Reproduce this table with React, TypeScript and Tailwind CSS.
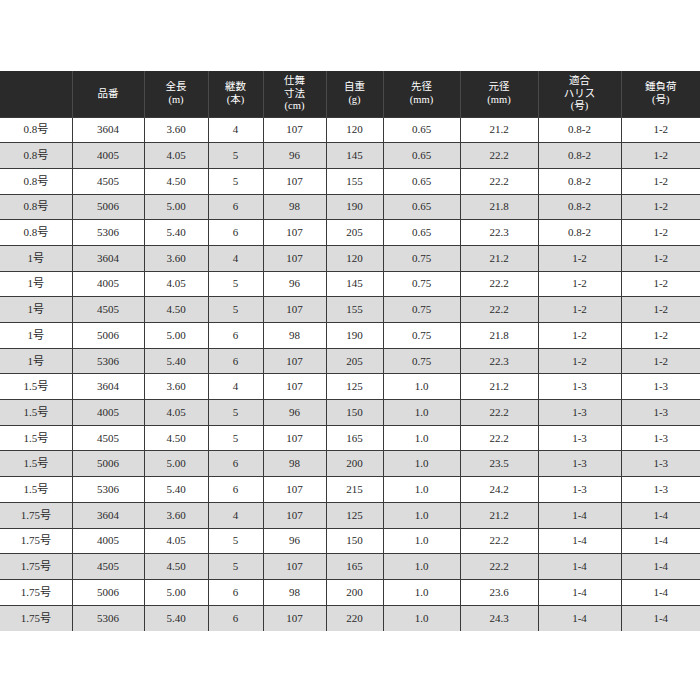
import React from "react";

type Row = string[];

const cols = [
  "w-[72px]",
  "w-[72px]",
  "w-[64px]",
  "w-[55px]",
  "w-[63px]",
  "w-[57px]",
  "w-[77px]",
  "w-[78px]",
  "w-[83px]",
  "w-[79px]",
];

const headers: string[][] = [
  [],
  ["品番"],
  ["全長", "(m)"],
  ["継数", "(本)"],
  ["仕舞", "寸法", "(cm)"],
  ["自重", "(g)"],
  ["先径", "(mm)"],
  ["元径", "(mm)"],
  ["適合", "ハリス", "(号)"],
  ["錘負荷", "(号)"],
];

const models = [
  ["3604", "3.60", "4", "107"],
  ["4005", "4.05", "5", "96"],
  ["4505", "4.50", "5", "107"],
  ["5006", "5.00", "6", "98"],
  ["5306", "5.40", "6", "107"],
];

const groups: { size: string; weights: string[]; tip: string; butts: string[]; harisu: string; load: string }[] = [
  { size: "0.8号", weights: ["120", "145", "155", "190", "205"], tip: "0.65", butts: ["21.2", "22.2", "22.2", "21.8", "22.3"], harisu: "0.8-2", load: "1-2" },
  { size: "1号", weights: ["120", "145", "155", "190", "205"], tip: "0.75", butts: ["21.2", "22.2", "22.2", "21.8", "22.3"], harisu: "1-2", load: "1-2" },
  { size: "1.5号", weights: ["125", "150", "165", "200", "215"], tip: "1.0", butts: ["21.2", "22.2", "22.2", "23.5", "24.2"], harisu: "1-3", load: "1-3" },
  { size: "1.75号", weights: ["125", "150", "165", "200", "220"], tip: "1.0", butts: ["21.2", "22.2", "22.2", "23.6", "24.3"], harisu: "1-4", load: "1-4" },
];

const rows: Row[] = groups.flatMap((g) =>
  models.map((m, i) => [g.size, m[0], m[1], m[2], m[3], g.weights[i], g.tip, g.butts[i], g.harisu, g.load])
);

export default function App() {
  return (
    <div className="w-[700px] h-[700px] bg-white pt-[71px] font-['Liberation_Serif','Noto_Sans_CJK_JP',serif]">
      <table className="w-[700px] table-fixed border-collapse">
        <colgroup>
          {cols.map((c, i) => (
            <col key={i} className={c} />
          ))}
        </colgroup>
        <thead>
          <tr className="h-[46px] bg-[#2a2a2a] text-white">
            {headers.map((h, i) => (
              <th
                key={i}
                className="border-l border-[#4a4a4a] first:border-l-0 p-0 text-[10.5px] font-normal leading-[12.5px] align-middle text-center"
              >
                {h.map((line, j) => (
                  <div key={j}>{line}</div>
                ))}
              </th>
            ))}
          </tr>
        </thead>
        <tbody>
          {rows.map((r, i) => (
            <tr
              key={i}
              className={`h-[25.7px] ${i % 2 === 0 ? "bg-white" : "bg-[#dcdcdc]"}`}
            >
              {r.map((v, j) => (
                <td
                  key={j}
                  className="border-l border-t border-[#3a3a3a] first:border-l-0 p-0 text-center text-[11px] leading-none text-[#2a2a2a]"
                >
                  {v}
                </td>
              ))}
            </tr>
          ))}
        </tbody>
      </table>
    </div>
  );
}
